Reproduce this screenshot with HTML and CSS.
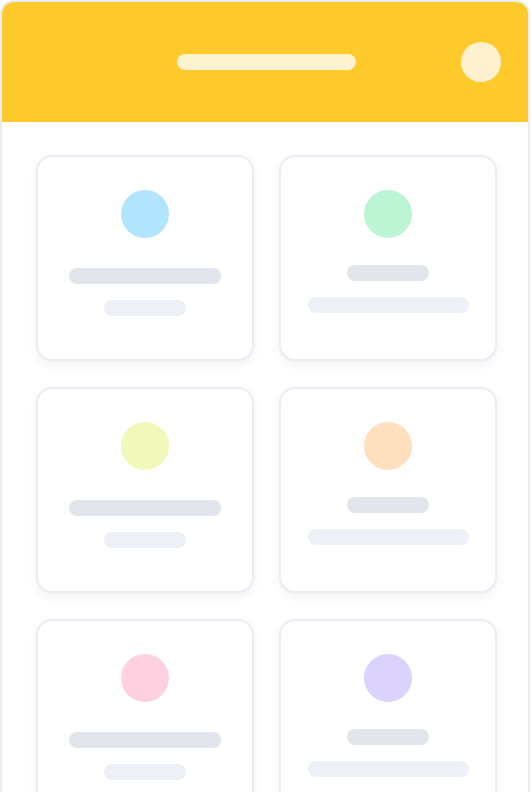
FILE: index.html
```html
<!DOCTYPE html>
<html lang="en">
<head>
    <meta charset="UTF-8">
    <meta name="viewport" content="width=device-width, initial-scale=1.0">
    <title>Team Directory</title>
    <link rel="stylesheet" href="styles.css">
</head>
<body>
    <div class="frame">
        <header class="header">
            <div class="title-bar"></div>
            <div class="avatar"></div>
        </header>

        <main class="grid">
            <div class="card wide-first">
                <div class="dot blue"></div>
                <div class="line line-long"></div>
                <div class="line-sub line-short"></div>
            </div>
            <div class="card short-first">
                <div class="dot green"></div>
                <div class="line line-short"></div>
                <div class="line-sub line-wide"></div>
            </div>

            <div class="card wide-first">
                <div class="dot lime"></div>
                <div class="line line-long"></div>
                <div class="line-sub line-short"></div>
            </div>
            <div class="card short-first">
                <div class="dot peach"></div>
                <div class="line line-short"></div>
                <div class="line-sub line-wide"></div>
            </div>

            <div class="card wide-first">
                <div class="dot pink"></div>
                <div class="line line-long"></div>
                <div class="line-sub line-short"></div>
            </div>
            <div class="card short-first">
                <div class="dot violet"></div>
                <div class="line line-short"></div>
                <div class="line-sub line-wide"></div>
            </div>
        </main>
    </div>
</body>
</html>
```

FILE: styles.css
```css
body {
    font-family: "Liberation Sans", Arial, sans-serif;
    margin: 0;
    padding: 0;
    background-color: #ffffff;
    overflow: hidden;
}

.frame {
    width: 530px;
    height: 900px;
    border: 2px solid #e9edf5;
    border-radius: 14px;
    overflow: hidden;
    box-sizing: border-box;
    background-color: #ffffff;
}

.header {
    height: 120px;
    background-color: #ffca2c;
    display: flex;
    align-items: center;
    padding-left: 175px;
    padding-right: 27px;
    box-sizing: border-box;
}

.title-bar {
    width: 179px;
    height: 16px;
    border-radius: 8px;
    background-color: #fef3d1;
}

.avatar {
    width: 40px;
    height: 40px;
    border-radius: 50%;
    background-color: #fef1d0;
    margin-left: auto;
}

.grid {
    display: grid;
    grid-template-columns: 218px 218px;
    column-gap: 25px;
    row-gap: 26px;
    padding: 33px 31px 0 34px;
}

.card {
    height: 206px;
    border: 2px solid #e8ecf4;
    border-radius: 16px;
    background-color: #ffffff;
    box-shadow: 0 4px 10px rgba(30, 40, 70, 0.06);
    box-sizing: border-box;
    display: flex;
    flex-direction: column;
    align-items: center;
    padding-top: 33px;
}

.dot {
    width: 48px;
    height: 48px;
    border-radius: 50%;
}

.blue { background-color: #b1e5fe; }
.green { background-color: #bbf5d4; }
.lime { background-color: #f2f8b9; }
.peach { background-color: #fee0bf; }
.pink { background-color: #fed0e0; }
.violet { background-color: #dbd3fd; }

.line,
.line-sub {
    height: 16px;
    border-radius: 8px;
}

.line {
    background-color: #e2e5ec;
}

.line-sub {
    background-color: #edf0f7;
    margin-top: 16px;
}

.wide-first .line {
    margin-top: 30px;
}

.short-first .line {
    margin-top: 27px;
}

.line-long { width: 152px; }
.line-short { width: 82px; }
.line-wide { width: 161px; }
```
